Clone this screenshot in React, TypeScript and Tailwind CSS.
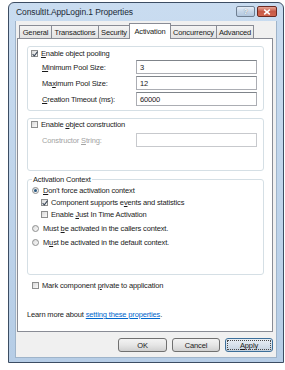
import React from 'react'

const U = ({ children }: { children: React.ReactNode }) => <span className="underline">{children}</span>

function Check({ on = false }: { on?: boolean }) {
  return (
    <span className="flex h-[7px] w-[7px] shrink-0 items-center justify-center border border-[#8e8f8f] bg-gradient-to-br from-[#d9d9d9] to-[#fbfbfb]">
      {on && (
        <svg viewBox="0 0 6 6" className="h-[6px] w-[6px] overflow-visible">
          <path d="M0.6 3.1 L2.3 4.8 L5.6 0.6" fill="none" stroke="#3e4a5a" strokeWidth="1.1" />
        </svg>
      )}
    </span>
  )
}

function Radio({ on = false }: { on?: boolean }) {
  return (
    <span className="flex h-[7px] w-[7px] shrink-0 items-center justify-center rounded-full border border-[#8e8f8f] bg-gradient-to-br from-[#dadada] to-[#fbfbfb]">
      {on && <span className="h-[3px] w-[3px] rounded-full bg-[#28577f]" />}
    </span>
  )
}

function Field({ label, value, disabled = false }: { label: React.ReactNode; value?: string; disabled?: boolean }) {
  return (
    <div className="flex h-[14px] items-center">
      <span className={disabled ? 'ml-[14px] w-[94px] text-[#a3a3a3]' : 'ml-[14px] w-[94px]'}>{label}</span>
      <div className={disabled ? 'flex h-[14px] w-[121px] items-center border border-[#c7c9cd] bg-white pl-[3px]' : 'flex h-[14px] w-[121px] items-center border border-[#abadb3] border-t-[#7f848a] bg-white pl-[3px]'}>
        {value}
      </div>
    </div>
  )
}

const tabs = [
  { name: 'General', w: 'w-[33px]' },
  { name: 'Transactions', w: 'w-[48px]' },
  { name: 'Security', w: 'w-[32px]' },
  { name: 'Activation', w: 'w-[42px]', on: true },
  { name: 'Concurrency', w: 'w-[47px]' },
  { name: 'Advanced', w: 'w-[38px]' },
]

export default function App() {
  return (
    <div className="h-[370px] w-[285px] overflow-hidden bg-white pt-[2px] pl-[8px] font-['Liberation_Sans',Arial,sans-serif] text-[7.5px] leading-[9px] tracking-[-0.15px] text-[#1a1a1a]">
      <div className="flex h-[361px] w-[276px] flex-col rounded-t-[6px] border border-[#3c4d63] bg-gradient-to-b from-[#c9dcf0] to-[#b6cde6] px-[6px] pb-[4px]">
        {/* title bar */}
        <div className="flex h-[18px] items-start justify-between">
          <span className="mt-[5px] pl-[1px] text-[8.5px] tracking-[-0.1px] text-[#202a36]">ConsultIt.AppLogin.1 Properties</span>
          <div className="mt-[3px] flex gap-[2px]">
            <div className="flex h-[11px] w-[19px] items-center justify-center rounded-[2px] border border-[#6f7f92] bg-gradient-to-b from-[#e6eef7] via-[#c6d6e8] to-[#b3c8df] text-[7px] font-bold leading-none text-white [text-shadow:0_0_1px_#4a5a6d]">
              ?
            </div>
            <div className="flex h-[11px] w-[20px] items-center justify-center rounded-[2px] border border-[#6b2a22] bg-gradient-to-b from-[#e7a697] via-[#c75a47] to-[#d2664f]">
              <svg viewBox="0 0 8 6" className="h-[6px] w-[8px]">
                <path d="M1.2 0.6 L6.8 5.4 M6.8 0.6 L1.2 5.4" stroke="#fff" strokeWidth="1.5" />
              </svg>
            </div>
          </div>
        </div>

        {/* client area */}
        <div className="flex flex-1 flex-col border-x border-b border-[#9fb4ca] bg-[#f0f0f0] pt-[2px] pl-[1px]">
          <div className="flex h-[15px] items-end pl-[2px]">
            {tabs.map((t, i) => (
              <div
                key={t.name}
                className={
                  t.on
                    ? `${t.w} relative z-10 -mb-px flex h-[16px] items-start justify-center border-x border-t border-[#898c95] bg-white pt-[3px] ${i ? '-ml-px' : ''}`
                    : `${t.w} flex h-[13px] items-center justify-center border-x border-t border-[#898c95] bg-gradient-to-b from-[#f4f4f4] to-[#e2e2e2] ${i ? '-ml-px' : ''}`
                }
              >
                {t.name}
              </div>
            ))}
          </div>

          {/* tab page */}
          <div className="flex h-[294px] w-[256px] flex-col border border-[#898c95] bg-white pt-[7px] pr-[8px] pl-[9px]">
            {/* object pooling */}
            <div className="flex flex-col rounded-[3px] border border-[#d5dfe5] pt-[2px] pb-[4px]">
              <div className="ml-[3px] flex h-[9px] items-center gap-[3px]">
                <Check on />
                <span>
                  <U>E</U>nable object pooling
                </span>
              </div>
              <div className="mt-[2px] flex flex-col gap-[2px]">
                <Field label={<><U>M</U>inimum Pool Size:</>} value="3" />
                <Field label={<>Ma<U>x</U>imum Pool Size:</>} value="12" />
                <Field label={<><U>C</U>reation Timeout (ms):</>} value="60000" />
              </div>
            </div>

            {/* construction */}
            <div className="mt-[7px] flex flex-col rounded-[3px] border border-[#d5dfe5] pt-[1px] pb-[23px]">
              <div className="ml-[3px] flex h-[9px] items-center gap-[3px]">
                <Check />
                <span>
                  Enable <U>o</U>bject construction
                </span>
              </div>
              <div className="mt-[4px]">
                <Field label={<>Constructor <U>S</U>tring:</>} disabled />
              </div>
            </div>

            {/* activation context */}
            <fieldset className="mt-[4px] flex flex-col rounded-[3px] border border-[#d5dfe5] pb-[27px]">
              <legend className="ml-[4px] px-[1px] leading-[9px]">Activation Context</legend>
              <div className="mt-[2px] ml-[4px] flex h-[9px] items-center gap-[4px]">
                <Radio on />
                <span>
                  <U>D</U>on't force activation context
                </span>
              </div>
              <div className="mt-[3px] ml-[13px] flex h-[9px] items-center gap-[3px]">
                <Check on />
                <span>
                  Component supports e<U>v</U>ents and statistics
                </span>
              </div>
              <div className="mt-[3px] ml-[13px] flex h-[9px] items-center gap-[3px]">
                <Check />
                <span>
                  Enable <U>J</U>ust In Time Activation
                </span>
              </div>
              <div className="mt-[5px] ml-[4px] flex h-[9px] items-center gap-[4px]">
                <Radio />
                <span>
                  Must <U>b</U>e activated in the callers context.
                </span>
              </div>
              <div className="mt-[5px] ml-[4px] flex h-[9px] items-center gap-[4px]">
                <Radio />
                <span>
                  M<U>u</U>st be activated in the default context.
                </span>
              </div>
            </fieldset>

            <div className="mt-[6px] ml-[5px] flex h-[9px] items-center gap-[3px]">
              <Check />
              <span>
                Mark component <U>p</U>rivate to application
              </span>
            </div>

            <div className="mt-[20px] h-[9px]">
              Learn more about <span className="text-[#0066cc] underline">setting these properties</span>.
            </div>
          </div>

          {/* buttons */}
          <div className="mt-[6px] flex w-[256px] justify-end gap-[5px]">
            <div className="flex h-[14px] w-[49px] items-center justify-center rounded-[3px] border border-[#707070] bg-gradient-to-b from-[#f3f3f3] via-[#e6e6e6] to-[#d0d0d0]">OK</div>
            <div className="flex h-[14px] w-[48px] items-center justify-center rounded-[3px] border border-[#707070] bg-gradient-to-b from-[#f3f3f3] via-[#e6e6e6] to-[#d0d0d0]">Cancel</div>
            <div className="flex h-[14px] w-[48px] items-center justify-center rounded-[3px] border border-[#3c6f9a] bg-gradient-to-b from-[#e9eff5] via-[#d8e2ec] to-[#c4d1de] p-[1px]">
              <div className="flex h-full w-full items-center justify-center border border-dotted border-[#4a4a4a]">
                <U>A</U>pply
              </div>
            </div>
          </div>
        </div>
      </div>
    </div>
  )
}
